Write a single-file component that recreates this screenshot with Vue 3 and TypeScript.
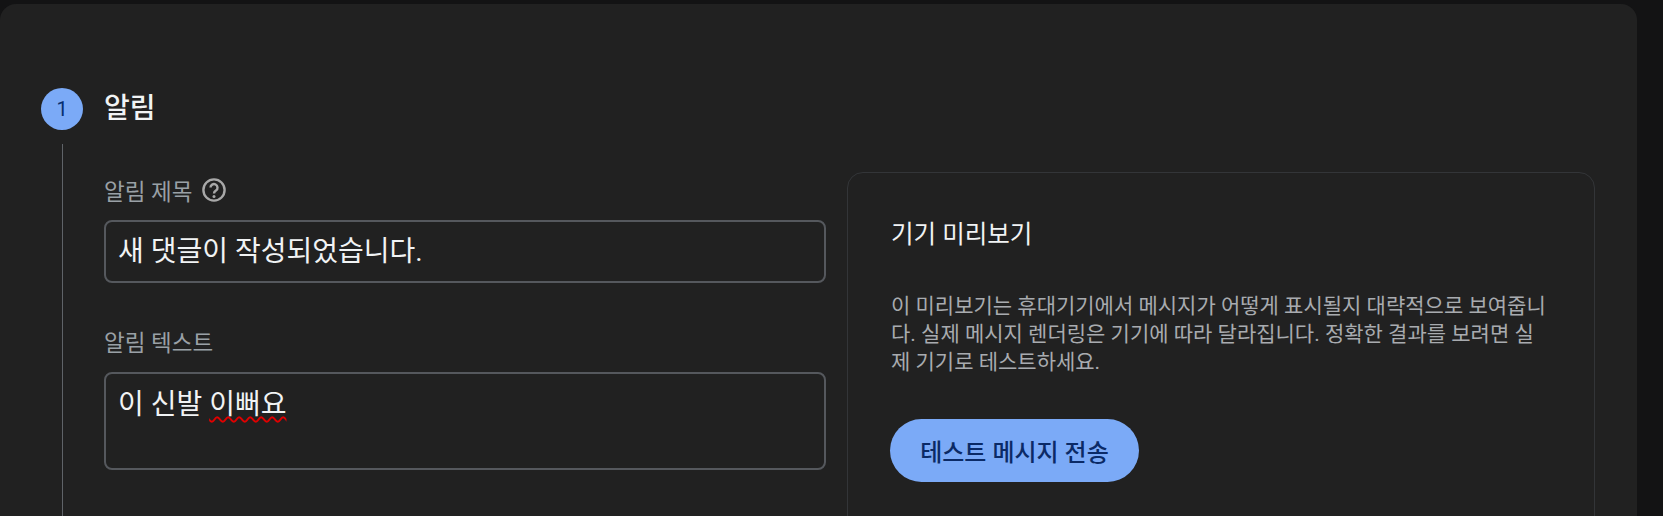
<script setup lang="ts">
const previewText =
  '이 미리보기는 휴대기기에서 메시지가 어떻게 표시될지 대략적으로 보여줍니다. 실제 메시지 렌더링은 기기에 따라 달라집니다. 정확한 결과를 보려면 실제 기기로 테스트하세요.'
</script>

<template>
  <div class="page">
    <section class="panel">
      <header class="step-head">
        <span class="step-num">1</span>
        <h2 class="step-title">알림</h2>
      </header>
      <div class="step-body">
        <div class="form">
          <div class="label-row">
            <label class="label">알림 제목</label>
            <svg class="help" viewBox="0 0 24 24" width="24" height="24" aria-hidden="true">
              <circle cx="12" cy="12" r="10.6" fill="none" stroke="currentColor" stroke-width="2.4" />
              <path d="M8.5 9.6a3.5 3.5 0 1 1 5.6 2.8c-1.2.9-2.1 1.5-2.1 3" fill="none" stroke="currentColor" stroke-width="2.4" />
              <circle cx="12" cy="18.4" r="1.5" fill="currentColor" />
            </svg>
          </div>
          <div class="field">새 댓글이 작성되었습니다.</div>
          <div class="label-row second">
            <label class="label">알림 텍스트</label>
          </div>
          <div class="field area">이 신발 <span class="typo">이뻐요</span></div>
        </div>
        <aside class="preview">
          <h3 class="preview-title">기기 미리보기</h3>
          <p class="preview-text">{{ previewText }}</p>
          <button class="send" type="button">테스트 메시지 전송</button>
        </aside>
      </div>
    </section>
  </div>
</template>

<style>
html,
body {
  height: 516px;
  overflow: hidden;
  background: #131314;
}
</style>

<style scoped>
.page {
  height: 516px;
  overflow: hidden;
  box-sizing: border-box;
  padding: 4px 26px 0 0;
  background: #131314;
  font-family: Roboto, "Noto Sans CJK KR", sans-serif;
}

.panel {
  height: 600px;
  box-sizing: border-box;
  padding: 84px 42px 0 41px;
  background: #212121;
  border-radius: 16px;
}

.step-head {
  display: flex;
  align-items: center;
  gap: 21px;
  height: 42px;
}

.step-num {
  width: 42px;
  height: 42px;
  display: flex;
  align-items: center;
  justify-content: center;
  border-radius: 50%;
  background: #7baaf7;
  color: #062e6f;
  font-size: 20px;
}

.step-title {
  margin: 0;
  color: #f1f3f4;
  font-size: 28px;
  font-weight: 500;
  line-height: 32px;
}

.step-body {
  display: flex;
  gap: 21px;
  margin: 14px 0 0 21px;
  padding: 28px 0 0 41px;
  border-left: 1px solid #5f6368;
}

.form {
  width: 722px;
  flex: none;
}

.label-row {
  display: flex;
  align-items: center;
  gap: 10px;
  height: 32px;
  margin-top: 2px;
  margin-bottom: 14px;
}

.label-row.second {
  margin-top: 42px;
  margin-bottom: 15px;
}

.label {
  color: #9aa0a6;
  font-size: 22.5px;
}

.help {
  color: #a8a8a8;
}

.field {
  box-sizing: border-box;
  height: 63px;
  padding: 13px 12px;
  border: 2px solid #55585d;
  border-radius: 8px;
  color: #f1f3f4;
  font-size: 28px;
  line-height: 34px;
}

.field.area {
  height: 98px;
  padding-top: 14px;
}

.typo {
  text-decoration: underline wavy #e00000 2px;
  text-underline-offset: 2px;
}

.preview {
  flex: 1;
  height: 400px;
  box-sizing: border-box;
  padding: 46px 43px 0;
  border: 1px solid #333538;
  border-radius: 16px;
}

.preview-title {
  margin: 0;
  color: #f1f3f4;
  font-size: 24.5px;
  font-weight: 400;
  line-height: 32px;
}

.preview-text {
  margin: 41px 0 0;
  color: #a8abaf;
  font-size: 21px;
  line-height: 28px;
}

.send {
  display: block;
  width: 249px;
  height: 63px;
  margin: 43px 0 0 -1px;
  padding: 0;
  border: 0;
  border-radius: 32px;
  background: #7baaf7;
  color: #0b2a66;
  font: 500 24px Roboto, "Noto Sans CJK KR", sans-serif;
}
</style>
